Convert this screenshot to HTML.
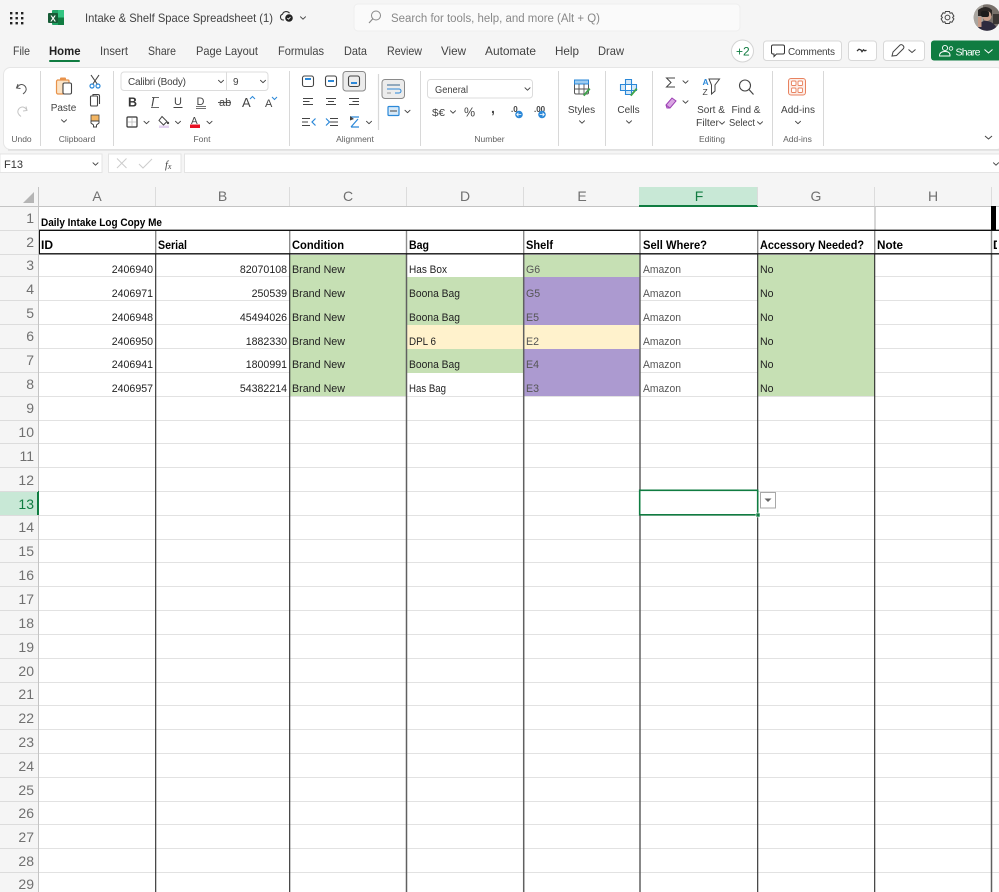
<!DOCTYPE html>
<html lang="en">
<head>
<meta charset="utf-8">
<title>Intake &amp; Shelf Space Spreadsheet</title>
<style>
html,body{margin:0;padding:0;background:#f5f5f5;width:999px;height:892px;overflow:hidden}
svg{display:block;font-family:"Liberation Sans",Arial,sans-serif;filter:blur(.3px)}
.t{fill:#424242;font-size:12px}
.s{fill:#424242;font-size:10px}
.l{fill:#616161;font-size:8.5px;text-anchor:middle}
.ch{fill:none;stroke:#444;stroke-width:1;stroke-linecap:round;stroke-linejoin:round}
.i{fill:none;stroke:#444;stroke-width:1.1}
.b{fill:none;stroke:#2b88d8;stroke-width:1.2}
.c{fill:#707070;font-size:14px;text-anchor:middle}
.r{fill:#707070;font-size:14px;text-anchor:end}
.d{fill:#222;font-size:10.6px}
.a{fill:#555;font-size:10.6px}
.n{fill:#222;font-size:10.6px;text-anchor:end}
.h{fill:#000;font-size:12px;font-weight:bold}
</style>
</head>
<body>
<svg width="999" height="892" viewBox="0 0 999 892" xmlns="http://www.w3.org/2000/svg">
<defs>
<path id="cv" class="ch" d="M-2.5-1.2 0 1.2 2.5-1.2"/>
</defs>
<rect width="999" height="892" fill="#f5f5f5"/>

<!-- title bar -->
<g fill="#222">
<rect x="10" y="12" width="2.4" height="2.4"/><rect x="15.5" y="12" width="2.4" height="2.4"/><rect x="21" y="12" width="2.4" height="2.4"/>
<rect x="10" y="17" width="2.4" height="2.4"/><rect x="15.5" y="17" width="2.4" height="2.4"/><rect x="21" y="17" width="2.4" height="2.4"/>
<rect x="10" y="22" width="2.4" height="2.4"/><rect x="15.5" y="22" width="2.4" height="2.4"/><rect x="21" y="22" width="2.4" height="2.4"/>
</g>
<rect x="52" y="10" width="12" height="15" rx="1" fill="#21a366"/>
<rect x="58" y="10" width="6" height="7.5" fill="#33c481"/>
<rect x="58" y="17.5" width="6" height="7.5" fill="#107c41"/>
<rect x="48" y="13" width="10" height="10" rx="1" fill="#185c37"/>
<text x="50.3" y="21.5" font-size="8.5" font-weight="bold" fill="#fff">X</text>
<text x="85" y="22" class="t" textLength="188" lengthAdjust="spacingAndGlyphs">Intake &amp; Shelf Space Spreadsheet (1)</text>
<path d="M284 20h-1a3 3 0 0 1-.5-5.800a4 4 0 0 1 7-1" fill="none" stroke="#333" stroke-width="1.1"/>
<circle cx="289" cy="18" r="3.800" fill="#222"/>
<path d="M287.300 18l1.200 1.200 2-2.200" fill="none" stroke="#fff" stroke-width=".8"/>
<use href="#cv" x="303" y="18"/>

<rect x="354" y="4" width="386" height="27" rx="4" fill="#fafafa" stroke="#eeeeee"/>
<circle cx="376" cy="15.500" r="4.500" fill="none" stroke="#888" stroke-width="1"/>
<path d="M372.800 18.800 369 23" stroke="#888" stroke-width="1.100"/>
<text x="391" y="22" font-size="11.500" fill="#888" textLength="209" lengthAdjust="spacingAndGlyphs">Search for tools, help, and more (Alt + Q)</text>

<circle cx="947.500" cy="17.500" r="2.400" fill="none" stroke="#444" stroke-width="1"/>
<path d="M945.500 11.500h4l.6 1.800 1.800-.6 2 3.400-1.300 1.400 1.300 1.400-2 3.400-1.800-.6-.6 1.800h-4l-.6-1.800-1.800.6-2-3.400 1.300-1.400-1.300-1.400 2-3.400 1.800.6z" fill="none" stroke="#444" stroke-width="1"/>
<clipPath id="av"><circle cx="987" cy="17.500" r="13.300"/></clipPath>
<g clip-path="url(#av)">
<rect x="973" y="4" width="28" height="28" fill="#77706a"/>
<rect x="973" y="4" width="10" height="28" fill="#a9a59f"/>
<path d="M978 10q8-6 14 0v6h-14z" fill="#2a2624"/>
<ellipse cx="987" cy="16" rx="4.500" ry="5" fill="#c9a08c"/>
<rect x="981" y="11" width="8" height="6" rx="2" fill="#1c1c1c"/>
<path d="M977 31q2-11 10-10t11 10z" fill="#2d2a3e"/>
<rect x="978" y="17" width="3.500" height="10" fill="#c79a86"/>
<rect x="993" y="14" width="8" height="10" fill="#3a3634"/>
</g>

<!-- tabs -->
<g class="t">
<text x="13" y="55" textLength="17" lengthAdjust="spacingAndGlyphs">File</text>
<text x="49" y="55" textLength="31.500" lengthAdjust="spacingAndGlyphs" font-weight="bold" fill="#222">Home</text>
<text x="100" y="55" textLength="28" lengthAdjust="spacingAndGlyphs">Insert</text>
<text x="148" y="55" textLength="28" lengthAdjust="spacingAndGlyphs">Share</text>
<text x="196" y="55" textLength="62" lengthAdjust="spacingAndGlyphs">Page Layout</text>
<text x="278" y="55" textLength="46" lengthAdjust="spacingAndGlyphs">Formulas</text>
<text x="344" y="55" textLength="23" lengthAdjust="spacingAndGlyphs">Data</text>
<text x="387" y="55" textLength="35" lengthAdjust="spacingAndGlyphs">Review</text>
<text x="441" y="55" textLength="25" lengthAdjust="spacingAndGlyphs">View</text>
<text x="485" y="55" textLength="51" lengthAdjust="spacingAndGlyphs">Automate</text>
<text x="555" y="55" textLength="24" lengthAdjust="spacingAndGlyphs">Help</text>
<text x="598" y="55" textLength="26" lengthAdjust="spacingAndGlyphs">Draw</text>
</g>
<rect x="49" y="60" width="31" height="2" rx="1" fill="#107c41"/>

<circle cx="742.500" cy="51" r="11" fill="#fff" stroke="#d4d4d4"/>
<text x="736" y="55.500" font-size="12" fill="#107c41">+</text>
<text x="743" y="55.500" font-size="12" fill="#107c41">2</text>
<rect x="763.500" y="41" width="78" height="19.500" rx="3" fill="#fff" stroke="#d8d8d8"/>
<path d="M773 45h10a1.500 1.500 0 0 1 1.500 1.500v6a1.500 1.500 0 0 1-1.500 1.500h-6.500l-2.500 2.500v-2.500h-1a1.500 1.500 0 0 1-1.500-1.500v-6a1.500 1.500 0 0 1 1.500-1.500z" fill="none" stroke="#333" stroke-width="1"/>
<text x="788" y="55" font-size="10" fill="#424242" textLength="47" lengthAdjust="spacing">Comments</text>
<rect x="848.500" y="41" width="28" height="19.500" rx="3" fill="#fff" stroke="#d8d8d8"/>
<path d="M857 51l2-1.800 2 .8 1 1.600 1.500-1.800 1.300 1 1.700-.6" fill="none" stroke="#333" stroke-width="1.300"/>
<rect x="883.500" y="41" width="41" height="19.500" rx="3" fill="#fff" stroke="#d8d8d8"/>
<path d="M892 56l1-4 7-7q1.500-1 3 .5t.5 3l-7 7z" fill="none" stroke="#444" stroke-width="1"/>
<path d="M908.500 49.500l3.500 3 3.500-3" fill="none" stroke="#444" stroke-width="1"/>
<rect x="931" y="40.500" width="70" height="20" rx="3" fill="#107c41"/>
<circle cx="945" cy="48" r="2.600" fill="none" stroke="#fff" stroke-width=".9"/>
<path d="M939.500 56q0-4.500 5.500-4.500t5 4.500z" fill="none" stroke="#fff" stroke-width=".9"/>
<circle cx="951" cy="48.500" r="1.800" fill="none" stroke="#fff" stroke-width=".8"/>
<text x="955.500" y="55.500" font-size="10.500" fill="#fff" textLength="25" lengthAdjust="spacing">Share</text>
<path d="M984.500 49.500l4 3.500 4-3.500" fill="none" stroke="#fff" stroke-width="1"/>

<!-- ribbon -->
<rect x="3.500" y="67.500" width="1000" height="82" rx="7" fill="#fff" stroke="#e6e6e6"/>
<path d="M8 150h991" stroke="#dcdcdc" stroke-width="1.200"/>
<g stroke="#d8d8d8" stroke-width="1">
<path d="M40.500 71v75M113.500 71v75M289.500 71v75M420.500 71v75M558.500 71v75M605.500 71v75M652.500 71v75M772.500 71v75M823.500 71v75"/>
<path d="M378.500 74v56" stroke-width="1.200"/>
</g>
<g class="l">
<text x="21.500" y="142">Undo</text><text x="77" y="142">Clipboard</text><text x="202" y="142">Font</text>
<text x="355" y="142">Alignment</text><text x="489.500" y="142">Number</text><text x="712" y="142">Editing</text><text x="797.500" y="142">Add-ins</text>
</g>
<!-- undo -->
<path d="M18 84l-1.500 4 4 .5M17 88q2-4 5-3.500t4 3.500-3 6" fill="none" stroke="#555" stroke-width="1"/>
<path d="M26 106.500l1 4-4 .5M27 110.500q-2-4-5-3.500t-4 3.500 3 6" fill="none" stroke="#c4c4c4" stroke-width="1"/>
<!-- paste -->
<path d="M57 80h11a1 1 0 0 1 1 1v3h-6v10h-5a1.500 1.500 0 0 1-1.500-1.500v-11a1.500 1.500 0 0 1 1.500-1.500z" fill="#fbe3c5" stroke="#e8924a" stroke-width="1.200"/>
<rect x="60" y="77.500" width="6" height="3" rx="1" fill="#e8924a"/>
<rect x="63" y="83" width="8.500" height="11" rx="1.500" fill="#fff" stroke="#444" stroke-width="1.100"/>
<text x="63.500" y="111" font-size="10" fill="#424242" text-anchor="middle">Paste</text>
<use href="#cv" x="64" y="121"/>
<!-- cut/copy/painter -->
<path d="M91 75l6.500 9.500M99 75l-6.500 9.500" stroke="#444" stroke-width="1.100" fill="none"/>
<circle cx="92" cy="86" r="2" class="b"/><circle cx="98" cy="86" r="2" class="b"/>
<rect x="90.500" y="96" width="7" height="10" rx="1" fill="#fff" class="i"/>
<path d="M93 96v-1.500h5a1.500 1.500 0 0 1 1.500 1.500v8" class="i"/>
<rect x="91" y="115" width="8" height="6" fill="#f3b562" stroke="#444" stroke-width=".8"/>
<path d="M91 121h8v2l-2.500 2v2h-3v-2l-2.500-2z" fill="#fff" stroke="#444" stroke-width="1"/>
<!-- font boxes -->
<rect x="121" y="72" width="147" height="18.500" rx="3" fill="#fff" stroke="#dcdcdc"/>
<path d="M226.500 72v18.500" stroke="#dcdcdc"/>
<text x="128" y="85" class="s" textLength="58" lengthAdjust="spacing">Calibri (Body)</text>
<use href="#cv" x="221" y="81.500"/>
<text x="233" y="85" class="s">9</text>
<use href="#cv" x="263" y="81.500"/>
<!-- font format -->
<text x="128" y="106.500" font-size="12.500" font-weight="bold" fill="#333">B</text>
<text x="151" y="106.500" font-size="12.500" font-style="italic" fill="#444">I</text>
<path d="M151 107.500h8" stroke="#444" stroke-width=".8"/><path d="M152 97.500h7" stroke="#444" stroke-width=".8"/>
<text x="174" y="105" font-size="11" fill="#444">U</text><path d="M173.500 107.500h9" stroke="#444"/>
<text x="196.500" y="105" font-size="11" fill="#444">D</text><path d="M196 106.500h10M196 108.500h10" stroke="#444" stroke-width=".8"/>
<text x="219" y="106" font-size="11" fill="#444">ab</text><path d="M218 102.500h13" stroke="#444" stroke-width=".9"/>
<text x="242" y="107" font-size="13" fill="#444">A</text>
<path d="M250 99l2.500-2.500 2.500 2.500" fill="none" stroke="#2b88d8" stroke-width="1"/>
<text x="265" y="107" font-size="11" fill="#444">A</text>
<path d="M272 97l2.500 2.500 2.500-2.500" fill="none" stroke="#2b88d8" stroke-width="1"/>
<rect x="127" y="117" width="10" height="10" rx="1" fill="#fff" stroke="#333" stroke-width="1.200"/>
<path d="M132 118v8M128 122h8" stroke="#bbb" stroke-width=".8"/>
<use href="#cv" x="146.500" y="122.500"/>
<path d="M162 116.500l5 5-3.500 3.500-4.500-4.500z" fill="none" stroke="#444" stroke-width="1"/>
<circle cx="168" cy="123" r="1.200" fill="#444"/>
<rect x="159" y="125.500" width="10" height="2.500" fill="#e3d2f0"/>
<use href="#cv" x="178" y="122.500"/>
<text x="191" y="124" font-size="10" fill="#444">A</text>
<rect x="190" y="124.500" width="10" height="3.500" fill="#e81123"/>
<use href="#cv" x="209.500" y="122.500"/>
<!-- alignment -->
<rect x="343" y="71.500" width="22.500" height="19.500" rx="3" fill="#ececec" stroke="#8a8a8a" stroke-width="1"/>
<rect x="302.500" y="76" width="11" height="10.500" rx="2" fill="#fff" class="i"/><rect x="305" y="78" width="6" height="2" fill="#2b88d8"/>
<rect x="325.500" y="76" width="11" height="10.500" rx="2" fill="#fff" class="i"/><rect x="328" y="80" width="6" height="2" fill="#2b88d8"/>
<rect x="348.500" y="76" width="11" height="10.500" rx="2" fill="#fff" class="i"/><rect x="351" y="82" width="6" height="2" fill="#2b88d8"/>
<g stroke="#444" stroke-width="1" fill="none">
<path d="M303 98.500h10M303 101.500h6.500M303 104.500h10"/>
<path d="M326 98.500h10M328 101.500h6M326 104.500h10"/>
<path d="M349 98.500h10M352.500 101.500h6.500M349 104.500h10"/>
<path d="M302 118.500h8M302 122h6M302 125.500h8"/>
<path d="M330 122h8M330 125.500h8M330 118.500h8"/>
</g>
<path d="M315.500 118.500l-3.500 3.500 3.500 3.500" class="b"/>
<path d="M326 118.500l3.500 3.500-3.500 3.500" class="b"/>
<path d="M350 117l9 0M358 119l-7 8M351 127l8 0" class="b"/>
<path d="M350 116l4 3-4 1.500z" fill="#444"/>
<use href="#cv" x="369" y="122.500"/>
<rect x="382" y="79.500" width="22.500" height="19" rx="3" fill="#ececec" stroke="#8a8a8a"/>
<path d="M387 85h13M387 89h12a2 2 0 0 1 0 4h-4" fill="none" stroke="#2b88d8" stroke-width="1"/>
<path d="M387 93h4M387 85h13" stroke="#444" stroke-width=".6"/>
<rect x="388" y="106.500" width="11" height="9" rx="1" fill="#d6e9f8" stroke="#2b88d8" stroke-width="1.200"/>
<path d="M390 111h7" stroke="#444" stroke-width="1"/>
<use href="#cv" x="407.500" y="111.500"/>
<!-- number -->
<rect x="427.500" y="79.500" width="105" height="18.500" rx="3" fill="#fff" stroke="#dcdcdc"/>
<text x="435" y="93" class="s" textLength="33" lengthAdjust="spacingAndGlyphs">General</text>
<use href="#cv" x="527.500" y="89"/>
<text x="432" y="116" font-size="10.500" fill="#444" textLength="13" lengthAdjust="spacingAndGlyphs">$€</text>
<use href="#cv" x="453" y="112"/>
<text x="464" y="116.500" font-size="12.500" fill="#444">%</text>
<text x="491" y="113" font-size="14" font-weight="bold" fill="#444">,</text>
<text x="511" y="112" font-size="8" font-weight="bold" fill="#444">.0</text>
<circle cx="519" cy="114.500" r="3.800" fill="#2b88d8"/><path d="M516.800 114.500h4.500M518.500 112.800l-1.700 1.700 1.700 1.700" stroke="#fff" stroke-width=".8" fill="none"/>
<text x="534" y="112" font-size="8" font-weight="bold" fill="#444">.00</text>
<circle cx="542" cy="114.500" r="3.800" fill="#2b88d8"/><path d="M539.700 114.500h4.500M542.500 112.800l1.700 1.700-1.700 1.700" stroke="#fff" stroke-width=".8" fill="none"/>
<!-- styles -->
<rect x="574.500" y="80" width="14" height="14" rx="1.500" fill="#fff" stroke="#555" stroke-width="1"/>
<rect x="574.500" y="80" width="14" height="4" fill="#9fcdf0" stroke="#2b88d8"/>
<path d="M574.500 89h14M579 84v10M584 84v10" stroke="#555" stroke-width=".9"/>
<path d="M583 95l6-7 1.500 1.200-6 7z" fill="#3fa34d"/>
<text x="581.500" y="113" class="s" text-anchor="middle">Styles</text>
<use href="#cv" x="582" y="122"/>
<!-- cells -->
<path d="M625.500 79.500h6v5h5v6h-5v4h-6v-4h-5v-6h5z" fill="#d6e9f8" stroke="#2b88d8" stroke-width="1.100"/>
<path d="M625.500 84.500h6v6h-6z" fill="#fff" stroke="#2b88d8" stroke-width="1"/>
<path d="M630 95l6-7 1.500 1.200-6 7z" fill="#3fa34d"/>
<text x="628.500" y="113" class="s" text-anchor="middle">Cells</text>
<use href="#cv" x="629" y="122"/>
<!-- editing -->
<path d="M675 78h-8.500l4.500 4.500-4.500 4.500h8.500" fill="none" stroke="#444" stroke-width="1"/>
<use href="#cv" x="685.500" y="82"/>
<path d="M666 105l6-7 4 3-6 7h-3z" fill="#d9a6e2" stroke="#9c3fb4" stroke-width="1"/>
<path d="M666 105l4 3" stroke="#9c3fb4"/>
<use href="#cv" x="685.500" y="102"/>
<text x="702.500" y="85" font-size="8.500" font-weight="bold" fill="#2b88d8">A</text>
<text x="702.500" y="95" font-size="8.500" fill="#444">Z</text>
<path d="M709 79h10.500l-4.500 6v6l-3.500 3v-9z" fill="none" stroke="#444" stroke-width="1"/>
<circle cx="745" cy="85.500" r="5.500" fill="none" stroke="#444" stroke-width="1.100"/>
<path d="M749 89.500l4.500 5" stroke="#444" stroke-width="1.200"/>
<text x="711" y="113" class="s" text-anchor="middle">Sort &amp;</text>
<text x="696" y="126" class="s" textLength="23" lengthAdjust="spacingAndGlyphs">Filter</text>
<use href="#cv" x="722" y="123"/>
<text x="746" y="113" class="s" text-anchor="middle">Find &amp;</text>
<text x="729" y="126" class="s" textLength="26" lengthAdjust="spacingAndGlyphs">Select</text>
<use href="#cv" x="760" y="123"/>
<!-- add-ins -->
<rect x="788.500" y="78.500" width="17" height="16.500" rx="2.500" fill="#fdeee8" stroke="#e8825f" stroke-width="1"/>
<rect x="791.500" y="81" width="4.500" height="4.500" rx="1" fill="#fff" stroke="#e8825f" stroke-width=".9"/>
<rect x="798" y="81" width="4.500" height="4.500" rx="1" fill="#fff" stroke="#e8825f" stroke-width=".9"/>
<rect x="791.500" y="88" width="4.500" height="4.500" rx="1" fill="#fff" stroke="#e8825f" stroke-width=".9"/>
<rect x="798" y="88" width="4.500" height="4.500" rx="1" fill="#fff" stroke="#e8825f" stroke-width=".9"/>
<text x="798" y="113" class="s" text-anchor="middle">Add-ins</text>
<use href="#cv" x="798" y="122.500"/>
<path d="M985 136l3.500 3 3.500-3" fill="none" stroke="#444" stroke-width="1"/>

<!-- formula bar -->
<rect x="0" y="154" width="102" height="18.500" fill="#fff" stroke="#e4e4e4"/>
<text x="4" y="168" font-size="11" fill="#333">F13</text>
<use href="#cv" x="95.500" y="164"/>
<rect x="108.500" y="154" width="72.500" height="18.500" fill="#fff" stroke="#e4e4e4"/>
<path d="M117 158.500l9.500 9.500M126.500 158.500L117 168" stroke="#ccc" stroke-width="1"/>
<path d="M139 164l4 4 9-9" fill="none" stroke="#ccc" stroke-width="1"/>
<text x="165" y="168" font-size="10.500" font-style="italic" font-family="Liberation Serif" fill="#444">f<tspan font-size="8" dy="1">x</tspan></text>
<rect x="184.500" y="154" width="816" height="18.500" fill="#fff" stroke="#e4e4e4"/>
<use href="#cv" x="996" y="164"/>

<!-- sheet background -->
<rect x="39" y="206" width="960" height="686" fill="#fff"/>
<rect x="0" y="187" width="999" height="19" fill="#f5f5f5"/>
<rect x="0" y="206" width="39" height="686" fill="#f5f5f5"/>
<path d="M23 203h11v-11z" fill="#b5b5b5"/>
<path d="M0 206.500h999" stroke="#c4c4c4" stroke-width="1"/>
<path d="M38.500 187v705" stroke="#c4c4c4" stroke-width="1"/>

<!-- header selection -->
<rect x="639" y="187" width="119" height="19" fill="#c8e8d6"/>
<rect x="639" y="205" width="119" height="2" fill="#107c41"/>
<rect x="0" y="491" width="39" height="24" fill="#c8e8d6"/>
<rect x="37" y="491" width="2" height="24" fill="#107c41"/>
<g stroke="#dcdcdc" stroke-width="1">
<path d="M155.500 187v19M289.500 187v19M406.500 187v19M523.500 187v19M757.500 187v19M874.500 187v19M991.500 187v19"/>
<path d="M0 230.500h38M0 254.500h38M0 276.500h38M0 300.500h38M0 324.500h38M0 348.500h38M0 372.500h38M0 396.500h38M0 420.500h38M0 443.500h38M0 467.500h38M0 491.500h38M0 515.500h38M0 539.500h38M0 562.500h38M0 586.500h38M0 610.500h38M0 634.500h38M0 658.500h38M0 682.500h38M0 705.500h38M0 729.500h38M0 753.500h38M0 777.500h38M0 801.500h38M0 824.500h38M0 848.500h38M0 872.500h38"/>
</g>

<!-- header labels -->
<g class="c">
<text x="97" y="201">A</text><text x="222.500" y="201">B</text><text x="348" y="201">C</text><text x="465" y="201">D</text><text x="582" y="201">E</text><text x="699" y="201" fill="#107c41">F</text><text x="816" y="201">G</text><text x="933" y="201">H</text>
</g>
<g class="r">
<text x="34" y="223">1</text><text x="34" y="247">2</text><text x="34" y="270">3</text><text x="34" y="294">4</text><text x="34" y="318">5</text><text x="34" y="341">6</text><text x="34" y="365">7</text><text x="34" y="389">8</text><text x="34" y="413">9</text>
<text x="34" y="437">10</text><text x="34" y="461">11</text><text x="34" y="485">12</text><text x="34" y="509" fill="#107c41">13</text><text x="34" y="532">14</text><text x="34" y="556">15</text><text x="34" y="580">16</text><text x="34" y="604">17</text><text x="34" y="628">18</text><text x="34" y="652">19</text><text x="34" y="676">20</text><text x="34" y="699">21</text><text x="34" y="723">22</text><text x="34" y="747">23</text><text x="34" y="771">24</text><text x="34" y="795">25</text><text x="34" y="818">26</text><text x="34" y="842">27</text><text x="34" y="866">28</text><text x="34" y="889">29</text>
</g>

<!-- fills -->
<rect x="290" y="255" width="116.500" height="141" fill="#c6e0b4"/>
<rect x="407" y="277" width="116.500" height="48" fill="#c6e0b4"/>
<rect x="407" y="325" width="116.500" height="24" fill="#fff2cc"/>
<rect x="407" y="349" width="116.500" height="24" fill="#c6e0b4"/>
<rect x="524" y="255" width="115.500" height="22" fill="#c6e0b4"/>
<rect x="524" y="277" width="115.500" height="48" fill="#ac9ad0"/>
<rect x="524" y="325" width="115.500" height="24" fill="#fff2cc"/>
<rect x="524" y="349" width="115.500" height="47" fill="#ac9ad0"/>
<rect x="758" y="255" width="116.500" height="141" fill="#c6e0b4"/>

<!-- gridlines -->
<g stroke="#e2e2e2" stroke-width="1">
<path d="M39 276.500h251M39 300.500h251M39 324.500h251M39 348.500h251M39 372.500h251"/>
<path d="M640 276.500h118M640 300.500h118M640 324.500h118M640 348.500h118M640 372.500h118"/>
<path d="M875 276.500h124M875 300.500h124M875 324.500h124M875 348.500h124M875 372.500h124"/>
<path d="M39 396.500h960M39 420.500h960M39 443.500h960M39 467.500h960M39 491.500h960M39 515.500h960M39 539.500h960M39 562.500h960M39 586.500h960M39 610.500h960M39 634.500h960M39 658.500h960M39 682.500h960M39 705.500h960M39 729.500h960M39 753.500h960M39 777.500h960M39 801.500h960M39 824.500h960M39 848.500h960M39 872.500h960"/>
</g>

<!-- cell borders: grey in row 2, dark from row 3 down -->
<g fill="none">
<path d="M155.700 231v23M289.700 231v23M406.500 231v23M523.700 231v23M640 231v23M757.700 231v23M874.700 231v23M991.500 231v23" stroke="#8c8c8c" stroke-width="1.400"/>
<path d="M155.700 254v638M289.700 254v638M757.700 254v638M874.700 254v638" stroke="#2a2a2a" stroke-width="1.100"/>
<path d="M406.500 254v638M523.700 254v638M640 254v638M991.500 254v638" stroke="#606060" stroke-width="1.500"/>
<path d="M875 206v24" stroke="#c8c8c8" stroke-width="1.500"/>
<path d="M39 230.300h960M39 253.800h960" stroke="#111" stroke-width="1.400"/>
<path d="M39.500 230v24" stroke="#111" stroke-width="1"/>
</g>
<rect x="991" y="206" width="5" height="24" fill="#000"/>

<!-- cell text -->
<text x="41" y="226" font-size="10.800" font-weight="bold" fill="#000" textLength="121" lengthAdjust="spacingAndGlyphs">Daily Intake Log Copy Me</text>
<g class="h">
<text x="41" y="249" textLength="12" lengthAdjust="spacingAndGlyphs">ID</text>
<text x="158" y="249" textLength="29" lengthAdjust="spacingAndGlyphs">Serial</text>
<text x="292" y="249" textLength="52" lengthAdjust="spacingAndGlyphs">Condition</text>
<text x="409" y="249" textLength="20" lengthAdjust="spacingAndGlyphs">Bag</text>
<text x="526" y="249" textLength="27" lengthAdjust="spacingAndGlyphs">Shelf</text>
<text x="643" y="249" textLength="64" lengthAdjust="spacingAndGlyphs">Sell Where?</text>
<text x="760" y="249" textLength="104" lengthAdjust="spacingAndGlyphs">Accessory Needed?</text>
<text x="877" y="249" textLength="26" lengthAdjust="spacingAndGlyphs">Note</text>
</g>
<clipPath id="edge"><rect x="992" y="235" width="5" height="18"/></clipPath>
<text x="993" y="249" class="h" clip-path="url(#edge)">D</text>

<g class="n">
<text x="153" y="273">2406940</text><text x="153" y="297">2406971</text><text x="153" y="321">2406948</text><text x="153" y="345">2406950</text><text x="153" y="368">2406941</text><text x="153" y="392">2406957</text>
<text x="287" y="273">82070108</text><text x="287" y="297">250539</text><text x="287" y="321">45494026</text><text x="287" y="345">1882330</text><text x="287" y="368">1800991</text><text x="287" y="392">54382214</text>
</g>
<g class="d">
<text x="292" y="273" textLength="53" lengthAdjust="spacingAndGlyphs">Brand New</text><text x="292" y="297" textLength="53" lengthAdjust="spacingAndGlyphs">Brand New</text><text x="292" y="321" textLength="53" lengthAdjust="spacingAndGlyphs">Brand New</text><text x="292" y="345" textLength="53" lengthAdjust="spacingAndGlyphs">Brand New</text><text x="292" y="368" textLength="53" lengthAdjust="spacingAndGlyphs">Brand New</text><text x="292" y="392" textLength="53" lengthAdjust="spacingAndGlyphs">Brand New</text>
<text x="409" y="273" textLength="38" lengthAdjust="spacingAndGlyphs">Has Box</text><text x="409" y="297" textLength="51" lengthAdjust="spacingAndGlyphs">Boona Bag</text><text x="409" y="321" textLength="51" lengthAdjust="spacingAndGlyphs">Boona Bag</text><text x="409" y="345" textLength="27" lengthAdjust="spacingAndGlyphs">DPL 6</text><text x="409" y="368" textLength="51" lengthAdjust="spacingAndGlyphs">Boona Bag</text><text x="409" y="392" textLength="37" lengthAdjust="spacingAndGlyphs">Has Bag</text>
<text x="760" y="273">No</text><text x="760" y="297">No</text><text x="760" y="321">No</text><text x="760" y="345">No</text><text x="760" y="368">No</text><text x="760" y="392">No</text>
</g>
<g class="a">
<text x="526" y="273">G6</text><text x="526" y="297">G5</text><text x="526" y="321">E5</text><text x="526" y="345">E2</text><text x="526" y="368">E4</text><text x="526" y="392">E3</text>
<text x="643" y="273" textLength="38" lengthAdjust="spacingAndGlyphs">Amazon</text><text x="643" y="297" textLength="38" lengthAdjust="spacingAndGlyphs">Amazon</text><text x="643" y="321" textLength="38" lengthAdjust="spacingAndGlyphs">Amazon</text><text x="643" y="345" textLength="38" lengthAdjust="spacingAndGlyphs">Amazon</text><text x="643" y="368" textLength="38" lengthAdjust="spacingAndGlyphs">Amazon</text><text x="643" y="392" textLength="38" lengthAdjust="spacingAndGlyphs">Amazon</text>
</g>

<!-- selection -->
<rect x="639.700" y="490.300" width="118" height="24.500" fill="#fff" stroke="#107c41" stroke-width="1.600"/>
<rect x="756" y="513" width="4" height="4" fill="#107c41" stroke="#fff" stroke-width=".6"/>
<rect x="760.500" y="492.500" width="15" height="15.500" fill="#fff" stroke="#a8a8a8"/>
<path d="M764.500 498.500h7l-3.500 3.500z" fill="#666"/>
</svg>
</body>
</html>
